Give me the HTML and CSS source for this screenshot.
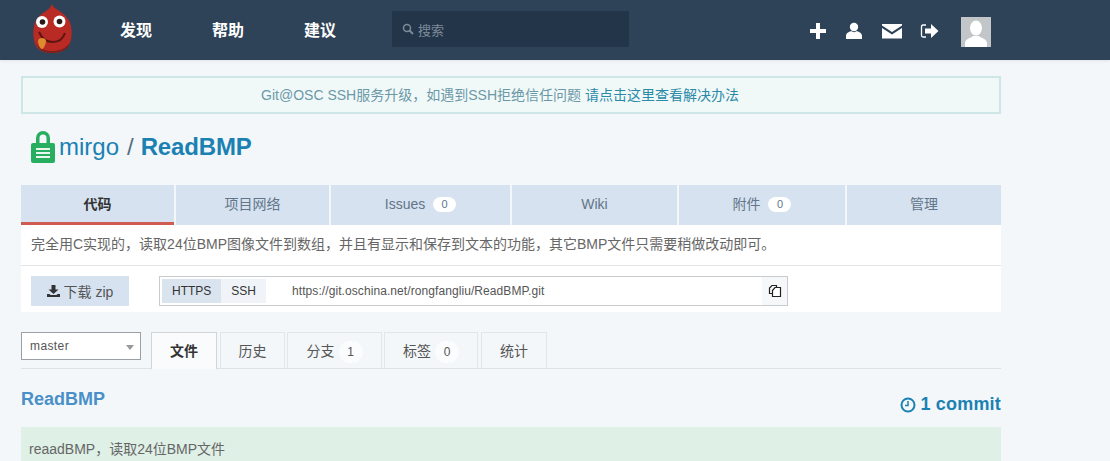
FILE: index.html
```html
<!DOCTYPE html>
<html lang="zh-CN">
<head>
    <meta charset="UTF-8">
    <meta name="viewport" content="width=device-width, initial-scale=1.0">
    <title>ReadBMP</title>
    <link rel="stylesheet" href="styles.css">
</head>
<body>
    <!-- Top bar -->
    <header class="topbar">
        <a class="logo" href="#">
            <svg width="40" height="54" viewBox="0 0 40 54">
                <path d="M20 1c1 3 3 4 6 6 6 4 12 9 13 16 1 6 1 12-1 17-3 7-10 10-18 10S5 47 3 41C1 35 1 29 2 23 4 15 9 11 14 8c3-2 5-4 6-7z" fill="#b92a25"/>
                <path d="M3 38c3 8 10 10 17 10s14-2 18-9c-1 7-9 11-18 11S5 46 3 38z" fill="#7c1f1b"/>
                <circle cx="10" cy="19" r="6" fill="#fff"/>
                <circle cx="27.500" cy="18.500" r="6" fill="#fff"/>
                <circle cx="10.500" cy="19" r="2.800" fill="#2a1a16"/>
                <circle cx="27.500" cy="18.500" r="2.800" fill="#2a1a16"/>
                <path d="M7 29c3 7 8 10 14 10 6 0 10-3 12-9" fill="none" stroke="#5d1512" stroke-width="2"/>
                <path d="M6 38c0-2 2-3 4-3s4 1 4 3-2 8-4 8-4-5-4-8z" fill="#dd8b2c"/>
            </svg>
        </a>
        <nav class="mainnav">
            <a href="#">发现</a>
            <a href="#">帮助</a>
            <a href="#">建议</a>
        </nav>
        <div class="searchbox">
            <svg width="12" height="12" viewBox="0 0 12 12"><circle cx="5" cy="5" r="3.500" fill="none" stroke="#7c8b9a" stroke-width="1.500"/><path d="M7.500 7.500L11 11" stroke="#7c8b9a" stroke-width="2"/></svg>
            <span>搜索</span>
        </div>
        <div class="usericons">
            <svg class="icon-plus" width="18" height="18" viewBox="0 0 18 18"><path d="M7 1h4v6h6v4h-6v6H7v-6H1V7h6z" fill="#fff"/></svg>
            <svg class="icon-user" width="18" height="18" viewBox="0 0 18 18"><circle cx="9" cy="5" r="4.200" fill="#fff"/><path d="M1 17v-3c0-3 3-4 5-5 2 1.500 4 1.500 6 0 2 1 5 2 5 5v3z" fill="#fff"/></svg>
            <svg class="icon-mail" width="22" height="16" viewBox="0 0 22 16"><path d="M1 1h20v1.500L11 9 1 2.500zM1 5l10 6.500L21 5v10.500H1z" fill="#fff"/></svg>
            <svg class="icon-out" width="19" height="16" viewBox="0 0 19 16"><path d="M6 2H3Q1.500 2 1.500 3.500v9Q1.500 14 3 14h3" fill="none" stroke="#fff" stroke-width="1.300"/><path d="M5 5.500h6V1l7.500 7-7.500 7v-4.500H5z" fill="#fff"/></svg>
            <div class="avatar">
                <svg width="30" height="30" viewBox="0 0 30 30"><rect width="30" height="30" fill="#c3c6c9"/><ellipse cx="15" cy="11" rx="6" ry="7.500" fill="#fff"/><path d="M4 30v-4c0-4 6-5 8-7h6c2 2 8 3 8 7v4z" fill="#fff"/></svg>
            </div>
        </div>
    </header>

    <main class="container">
        <div class="notice">Git@OSC SSH服务升级，如遇到SSH拒绝信任问题 <a href="#">请点击这里查看解决办法</a></div>

        <h1 class="repo-title">
            <svg width="26" height="33" viewBox="0 0 26 33">
                <path d="M6 15V8a7 7 0 0 1 14 0v7h-3.500V8a3.500 3.500 0 0 0-7 0v7z" fill="#27ae60"/>
                <rect x="1" y="13" width="24" height="20" rx="2" fill="#27ae60"/>
                <path d="M6 18h14v2H6zM6 22h14v2H6zM6 26h14v2H6z" fill="#e9f7ef"/>
            </svg>
            <a href="#">mirgo</a><span class="slash">/</span><a class="repo-name" href="#">ReadBMP</a>
        </h1>

        <!-- Project tabs -->
        <ul class="project-tabs">
            <li class="active tab-code">代码</li>
            <li class="tab-net">项目网络</li>
            <li class="tab-issues">Issues <span class="pill">0</span></li>
            <li class="tab-wiki">Wiki</li>
            <li class="tab-attach">附件 <span class="pill">0</span></li>
            <li class="tab-admin">管理</li>
        </ul>

        <div class="panel">
            <p class="description">完全用C实现的，读取24位BMP图像文件到数组，并且有显示和保存到文本的功能，其它BMP文件只需要稍做改动即可。</p>
            <div class="clone-row">
                <a class="download" href="#">
                    <svg width="13" height="12" viewBox="0 0 13 12"><path d="M4.500 0h4v4.500h3L6.500 9l-5-4.500h3zM0 9h2.500l1 1h6l1-1H13v3H0z" fill="#333"/></svg>
                    下载 zip
                </a>
                <div class="clone-box">
                    <span class="proto on">HTTPS</span>
                    <span class="proto">SSH</span>
                    <span class="clone-url">https://git.oschina.net/rongfangliu/ReadBMP.git</span>
                    <span class="copy">
                        <svg width="14" height="14" viewBox="0 0 14 14"><path d="M8.500 3.500V1.500H4L1.500 4v5.500h3" fill="none" stroke="#222" stroke-width="1.200"/><path d="M4.500 6.500l2.500-3h5.500v9h-8z" fill="#fff" stroke="#222" stroke-width="1.200"/></svg>
                    </span>
                </div>
            </div>
        </div>

        <!-- File tabs -->
        <div class="file-nav">
            <div class="branch-select">master<i class="caret"></i></div>
            <a class="file-tab on tab-files" href="#">文件</a>
            <a class="file-tab tab-history" href="#">历史</a>
            <a class="file-tab tab-branches" href="#">分支<span class="count">1</span></a>
            <a class="file-tab tab-tags" href="#">标签<span class="count">0</span></a>
            <a class="file-tab tab-stats" href="#">统计</a>
        </div>

        <div class="repo-head">
            <a class="repo-heading" href="#">ReadBMP</a>
            <a class="commits" href="#">
                <svg width="16" height="16" viewBox="0 0 16 16"><circle cx="8" cy="8" r="6.500" fill="none" stroke="#1b81b3" stroke-width="2"/><path d="M8 4v4.500H5" fill="none" stroke="#1b81b3" stroke-width="1.500"/></svg>
                1 commit
            </a>
        </div>

        <div class="commit-msg">reaadBMP，读取24位BMP文件</div>
    </main>
</body>
</html>
```

FILE: styles.css
```css
html, body {
    margin: 0;
    padding: 0;
    height: 461px;
    overflow: hidden;
}

body {
    background: #f3f7fa;
    font-family: "Liberation Sans", "Noto Sans CJK SC", sans-serif;
    color: #666;
    font-size: 14px;
}

a {
    text-decoration: none;
    color: inherit;
}

/* top bar */
.topbar {
    height: 60px;
    background: #2e4358;
    display: flex;
    align-items: center;
    box-shadow: 0 1px 3px rgba(0, 0, 0, 0.08);
}

.logo {
    display: block;
    width: 40px;
    height: 54px;
    margin-left: 32px;
}

.mainnav {
    display: flex;
    margin: -2px 0 0 48px;
    gap: 60px;
}

.mainnav a {
    color: #fff;
    font-size: 16px;
    font-weight: bold;
}

.searchbox {
    width: 237px;
    height: 36px;
    margin: -2px 0 0 56px;
    background: #233549;
    color: #7c8b9a;
    font-size: 13px;
    display: flex;
    align-items: center;
    gap: 4px;
    padding-left: 10px;
    box-sizing: border-box;
}

.usericons {
    display: flex;
    align-items: center;
    margin-left: 180px;
}

.icon-plus { margin-right: 18px; margin-top: 2px; }
.icon-user { margin-right: 18px; margin-top: 2px; }
.icon-mail { margin-right: 17px; margin-top: 2px; }
.icon-out { margin-right: 22px; margin-top: 2px; }

.avatar {
    width: 30px;
    height: 30px;
    margin-top: 3px;
}

.avatar svg {
    display: block;
}

.container {
    width: 980px;
    margin-left: 21px;
}

.notice {
    margin-top: 16px;
    height: 38px;
    line-height: 34px;
    box-sizing: border-box;
    border: 2px solid #cfe6e8;
    background: #f1f9f8;
    padding-right: 22px;
    text-align: center;
    color: #6b98a8;
}

.notice a {
    color: #2b8aa8;
}

.repo-title {
    display: flex;
    align-items: center;
    height: 33px;
    margin: 16px 0 0 9px;
    font-size: 24px;
    font-weight: normal;
    color: #1b81b3;
}

.repo-title svg {
    margin-right: 3px;
}

.slash {
    margin: 0 7px 0 8px;
    color: #55707f;
}

.repo-name {
    font-weight: bold;
    letter-spacing: -0.15px;
}

/* project tabs */
.project-tabs {
    list-style: none;
    display: flex;
    gap: 2px;
    margin: 22px 0 0;
    padding: 0;
}

.project-tabs li {
    height: 40px;
    box-sizing: border-box;
    line-height: 38px;
    background: #d6e2ef;
    text-align: center;
    color: #62758a;
}

.project-tabs li.active {
    border-bottom: 3px solid #cf5b52;
    color: #333;
    font-weight: bold;
}

.tab-code { width: 153px; }
.tab-net { width: 153px; }
.tab-issues { width: 179px; }
.tab-wiki { width: 165px; }
.tab-attach { width: 166px; }
.tab-admin { width: 154px; }

.pill {
    display: inline-block;
    width: 23px;
    height: 15px;
    line-height: 15px;
    margin-left: 4px;
    border-radius: 8px;
    background: #fff;
    font-size: 11px;
    font-weight: normal;
    vertical-align: 1px;
}

.panel {
    background: #fff;
}

.description {
    margin: 0;
    height: 41px;
    line-height: 38px;
    padding-left: 10px;
    box-sizing: border-box;
    border-bottom: 1px solid #e3e6e8;
}

.clone-row {
    display: flex;
    padding: 10px 0 6px 10px;
}

.download {
    width: 98px;
    height: 30px;
    background: #d6e2ef;
    display: flex;
    align-items: center;
    justify-content: center;
    gap: 4px;
    color: #555;
}

.clone-box {
    width: 629px;
    height: 30px;
    margin-left: 30px;
    box-sizing: border-box;
    border: 1px solid #c9cccf;
    display: flex;
    align-items: center;
    padding-left: 2px;
    font-size: 12px;
}

.proto {
    height: 24px;
    line-height: 24px;
    padding: 0 10px;
    background: #f0f4f8;
    color: #333;
}

.proto.on {
    background: #dae4ee;
}

.clone-url {
    margin-left: 26px;
    color: #555;
    letter-spacing: 0.08px;
    flex: 1;
}

.copy {
    width: 25px;
    height: 28px;
    background: #f6f7f8;
    display: flex;
    align-items: center;
    justify-content: center;
}

/* file tabs */
.file-nav {
    display: flex;
    align-items: flex-start;
    height: 36px;
    margin-top: 20px;
    border-bottom: 1px solid #dde2e6;
}

.branch-select {
    position: relative;
    width: 120px;
    height: 28px;
    line-height: 27px;
    box-sizing: border-box;
    border: 1px solid #9aa0a5;
    background: #fff;
    padding-left: 8px;
    font-size: 12px;
    letter-spacing: 0.4px;
    color: #555;
}

.caret {
    position: absolute;
    right: 6px;
    top: 12px;
    border: 4px solid transparent;
    border-top: 5px solid #999;
    border-bottom: 0;
}

.file-tab {
    display: block;
    height: 36px;
    line-height: 37px;
    box-sizing: border-box;
    border: 1px solid #e2e6ea;
    border-bottom: 0;
    text-align: center;
    color: #555;
}

.file-tab.on {
    background: #f9fbfc;
    border-color: #d0d5d9;
    color: #333;
    font-weight: bold;
    height: 37px;
}

.tab-files { width: 66px; margin-left: 10px; }
.tab-history { width: 65px; margin-left: 3px; }
.tab-branches { width: 95px; margin-left: 2px; }
.tab-tags { width: 94px; margin-left: 2px; }
.tab-stats { width: 66px; margin-left: 3px; }

.count {
    display: inline-block;
    width: 24px;
    height: 22px;
    line-height: 22px;
    margin-left: 4px;
    border-radius: 11px;
    background: #fbfcfd;
    font-size: 12px;
}

.repo-head {
    display: flex;
    justify-content: space-between;
    align-items: flex-start;
    height: 58px;
    padding-top: 20px;
    box-sizing: border-box;
}

.repo-heading {
    font-size: 18px;
    font-weight: bold;
    color: #4a90c8;
}

.commits {
    display: flex;
    align-items: center;
    gap: 4px;
    margin-top: 5px;
    font-size: 18px;
    font-weight: bold;
    letter-spacing: 0.2px;
    color: #1b81b3;
}

.commit-msg {
    background: #dff0e6;
    height: 34px;
    padding: 11px 0 0 8px;
    box-sizing: border-box;
    color: #666;
}
```
